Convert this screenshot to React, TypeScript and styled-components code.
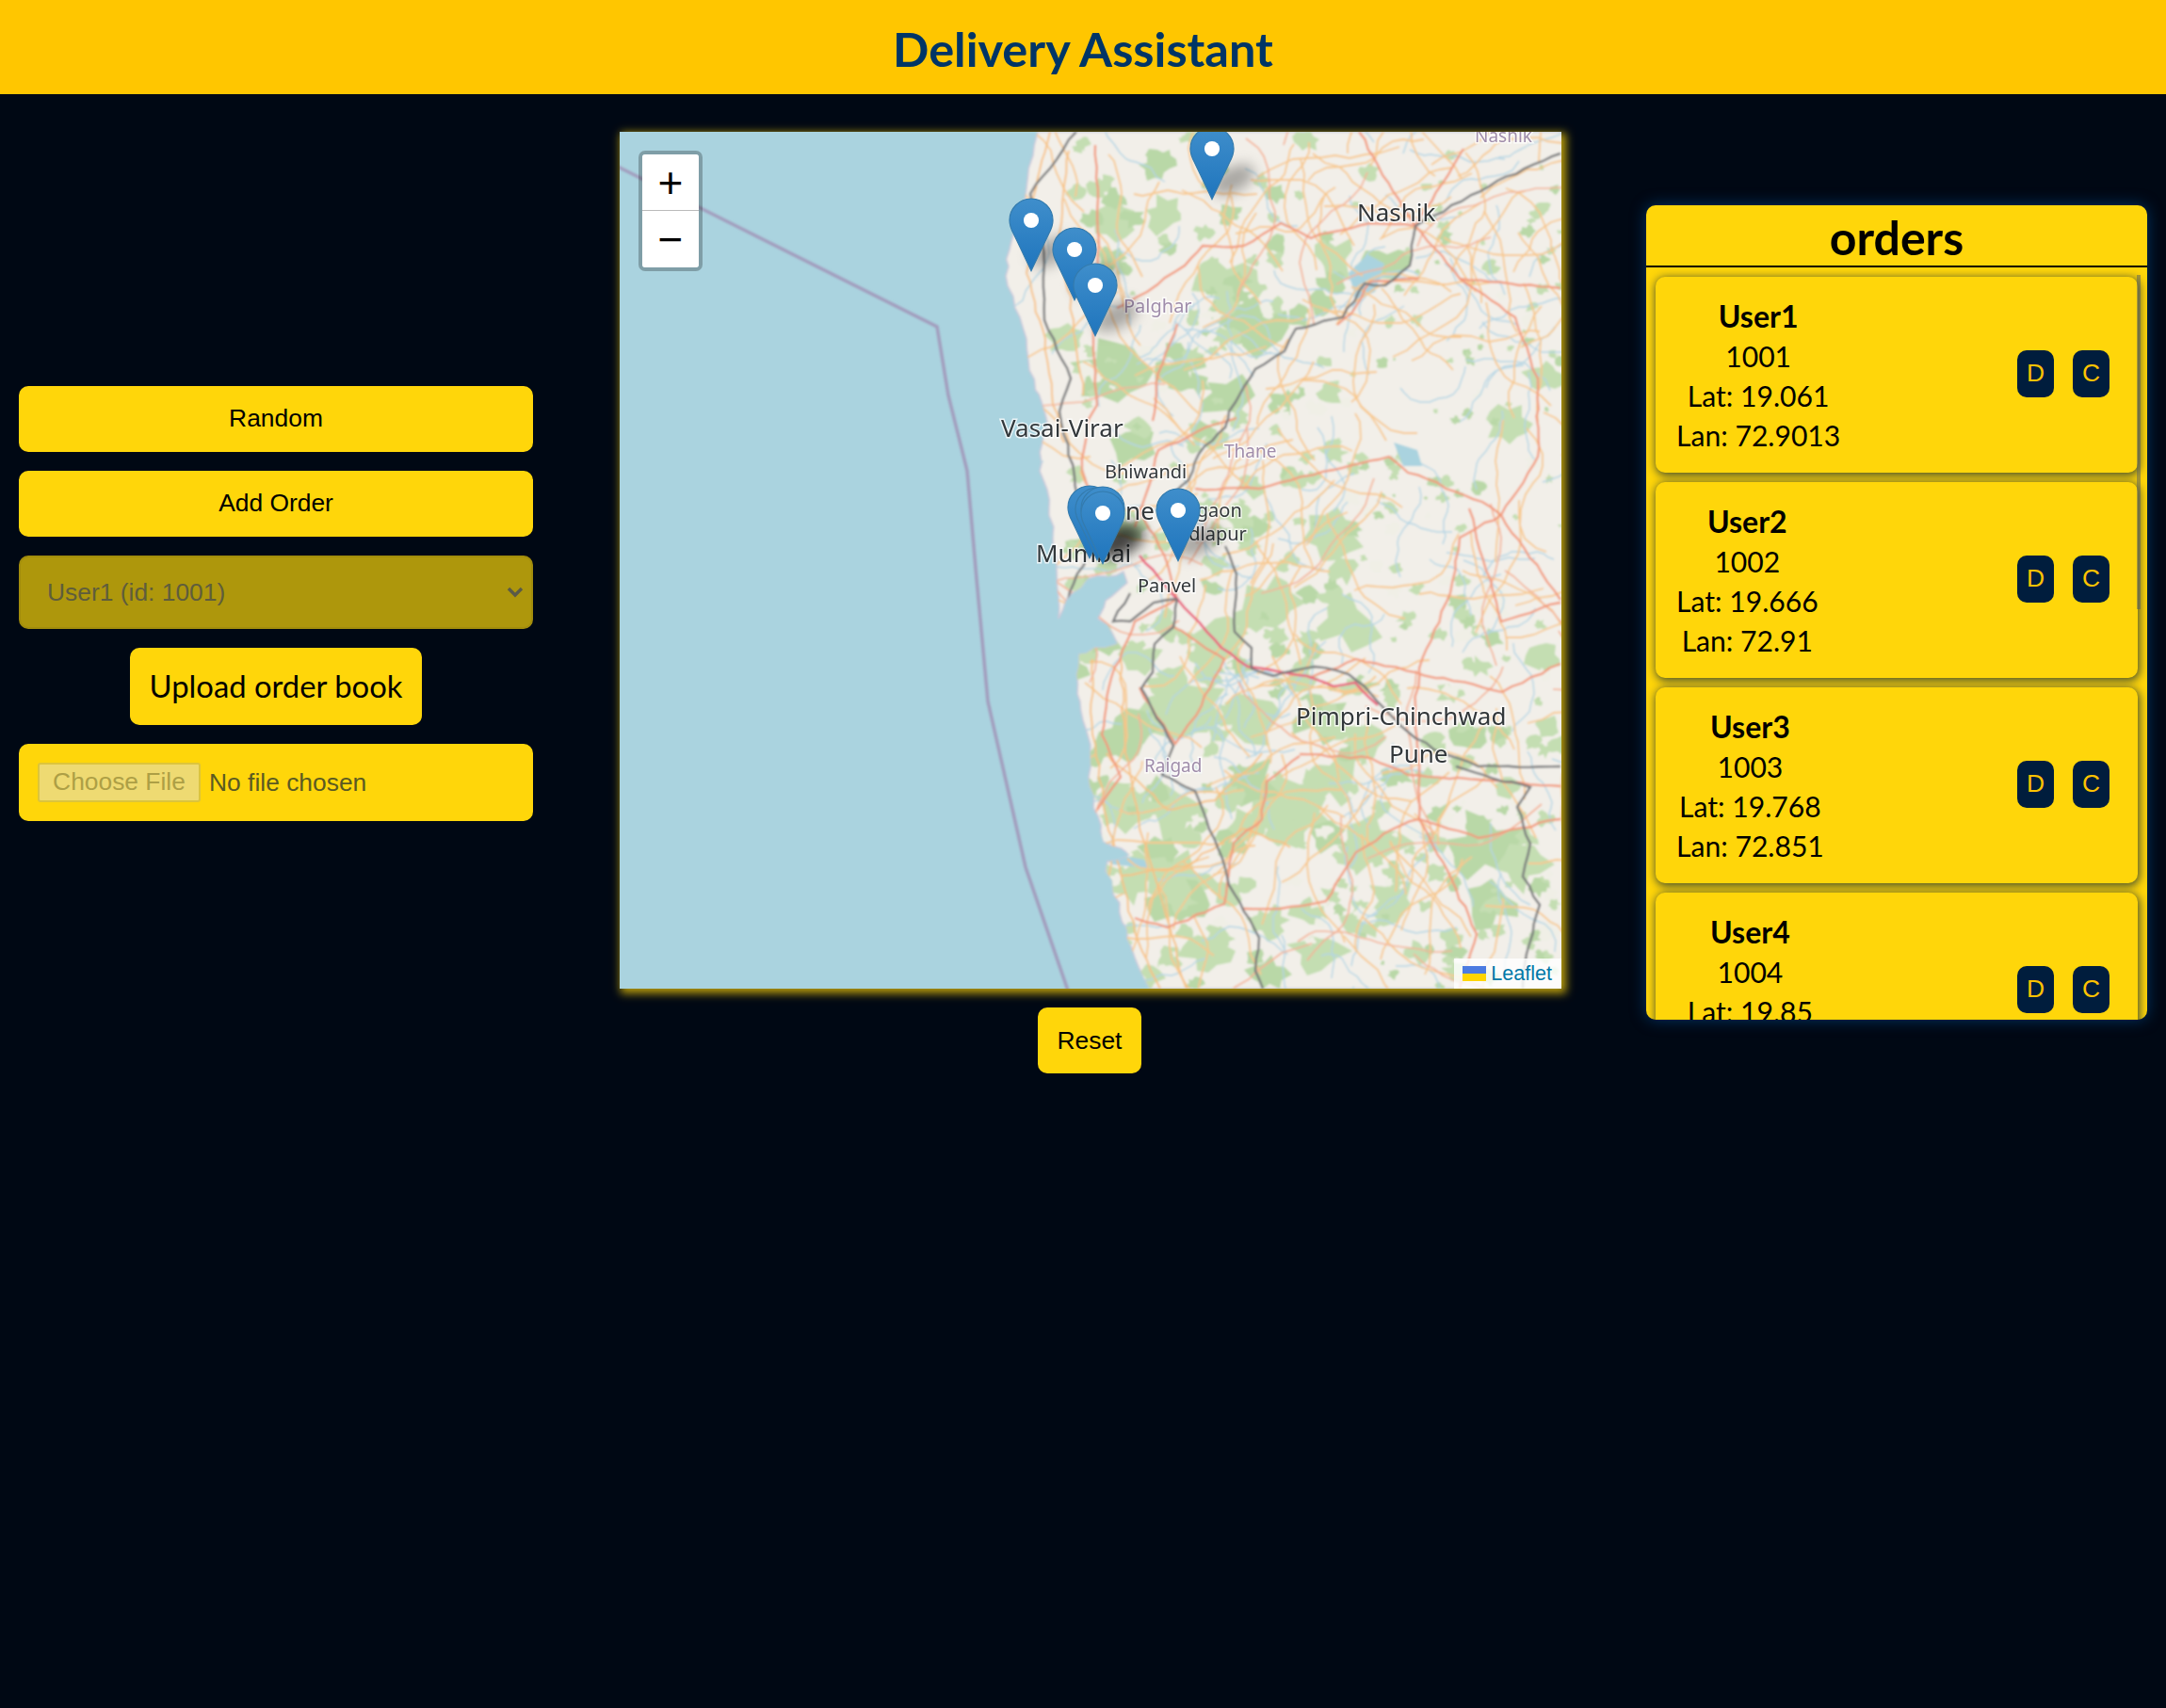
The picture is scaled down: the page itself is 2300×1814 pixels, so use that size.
import styled, { createGlobalStyle } from "styled-components";

const GlobalStyle = createGlobalStyle`
  body {
    margin: 0;
    background-color: #000814;
    font-family: "Lato", "Open Sans", sans-serif;
  }
`;

const Page = styled.div`
  min-height: 1814px;
  background-color: #000814;
`;

const Header = styled.header`
  height: 100px;
  display: flex;
  align-items: center;
  justify-content: center;
  background-color: #ffc600;
`;

const Title = styled.h1`
  margin: 3px 0 0;
  font-size: 50.5px;
  font-weight: 700;
  color: #003566;
`;

const Main = styled.main`
  display: flex;
  align-items: center;
  padding: 40px 0;
`;

const Controls = styled.section`
  width: 546px;
  margin: 1px 0 0 20px;
  display: flex;
  flex-direction: column;
  align-items: center;
  gap: 20px;
`;

const WideButton = styled.button`
  width: 100%;
  height: 70px;
  border: none;
  border-radius: 10px;
  background-color: #ffd60a;
  color: #000;
  font-family: "Liberation Sans", Arial, sans-serif;
  font-size: 26.4px;
`;

const SelectWrap = styled.div`
  position: relative;
  width: 100%;
`;

const OrderSelect = styled.select`
  display: block;
  width: 100%;
  height: 78px;
  padding: 0 0 0 28px;
  appearance: none;
  border: 2px solid #a28d0c;
  border-radius: 10px;
  background-color: #ae970c;
  color: #5f5d3c;
  opacity: 1;
  font-family: "Liberation Sans", Arial, sans-serif;
  font-size: 26.4px;
`;

const SelectArrow = styled.svg`
  position: absolute;
  top: 32px;
  right: 10px;
  width: 18px;
  height: 14px;
  pointer-events: none;
`;

const UploadLabel = styled.label`
  height: 82px;
  padding: 0 20.5px;
  display: flex;
  align-items: center;
  border-radius: 10px;
  background-color: #ffd60a;
  color: #000;
  font-size: 32.8px;
`;

const FileInput = styled.input`
  box-sizing: border-box;
  width: 100%;
  height: 82px;
  padding: 20px;
  border-radius: 10px;
  background-color: #ffd60a;
  color: #5b5a22;
  font-family: "Liberation Sans", Arial, sans-serif;
  font-size: 26.4px;

  &::file-selector-button {
    height: 42px;
    width: 173px;
    margin-right: 9px;
    border: 2px solid #dcc43c;
    border-radius: 3px;
    background-color: #eeda72;
    color: #ad9f45;
    font-family: "Liberation Sans", Arial, sans-serif;
    font-size: 26.4px;
  }
`;

const MapColumn = styled.section`
  width: 1000px;
  margin-left: 92px;
  display: flex;
  flex-direction: column;
  align-items: center;
  gap: 20px;
`;

const MapGlow = styled.div`
  width: 1000px;
  height: 910px;
  box-shadow: 3px 3px 9px 2px rgba(255, 214, 10, 0.72);
`;

const MapFrame = styled.div`
  position: relative;
  width: 1000px;
  height: 910px;
  overflow: hidden;
`;

const MapCanvas = styled.svg`
  display: block;
  width: 1000px;
  height: 910px;
`;

const ZoomBox = styled.div`
  position: absolute;
  top: 20px;
  left: 20px;
  width: 60px;
  display: flex;
  flex-direction: column;
  border: 4px solid rgba(0, 0, 0, 0.25);
  border-radius: 7px;
  background-clip: padding-box;
`;

const ZoomButton = styled.button<{ $first?: boolean }>`
  height: 60px;
  padding: 0;
  border: none;
  border-bottom: ${(p) => (p.$first ? "1px solid #bbb" : "none")};
  border-radius: ${(p) => (p.$first ? "3px 3px 0 0" : "0 0 3px 3px")};
  background-color: #fff;
  color: #000;
  font-family: "Liberation Sans", Arial, sans-serif;
  font-size: 46px;
  line-height: 1;
`;

const Attribution = styled.div`
  position: absolute;
  right: 0;
  bottom: 0;
  height: 32px;
  padding: 0 10px 0 9px;
  display: flex;
  align-items: center;
  gap: 5px;
  background-color: rgba(255, 255, 255, 0.8);
  color: #0078a8;
  font-family: "Liberation Sans", Arial, sans-serif;
  font-size: 21.6px;
`;

const FlagIcon = styled.svg`
  width: 25px;
  height: 16px;
`;

const ResetButton = styled.button`
  width: 110px;
  height: 70px;
  margin-right: 2px;
  border: none;
  border-radius: 10px;
  background-color: #ffd60a;
  color: #000;
  font-family: "Liberation Sans", Arial, sans-serif;
  font-size: 26.4px;
`;

const OrdersPanel = styled.aside`
  position: relative;
  width: 532px;
  height: 865px;
  margin: 20px 0 0 90px;
  overflow: hidden;
  border-radius: 10px;
  background-color: #ffd60a;
  box-shadow: 0 0 16px #003566;
`;

const PanelTitle = styled.h2`
  box-sizing: border-box;
  height: 66px;
  margin: 0;
  border-bottom: 2px solid #000;
  font-size: 50px;
  line-height: 68px;
  font-weight: 700;
  text-align: center;
  color: #000;
`;

const OrderList = styled.div`
  padding: 10px;
  display: flex;
  flex-direction: column;
  gap: 10px;
`;

const OrderCard = styled.div`
  flex: none;
  height: 208px;
  box-sizing: border-box;
  padding: 23px 30px 20px 22px;
  display: flex;
  align-items: center;
  justify-content: space-between;
  border-radius: 10px;
  background-color: #ffd60a;
  box-shadow: 1px 2px 10px 1px rgba(0, 29, 61, 0.72);
`;

const OrderInfo = styled.div`
  text-align: center;
  font-size: 30.1px;
  line-height: 42px;
  color: #000;
`;

const UserName = styled.div`
  font-size: 32px;
  font-weight: 700;
`;

const CardActions = styled.div`
  display: flex;
  gap: 20px;
  margin-top: -5px;
`;

const ActionButton = styled.button`
  height: 50px;
  padding: 0 10px;
  border: none;
  border-radius: 10px;
  background-color: #001d3d;
  color: #ffc300;
  font-family: "Liberation Sans", Arial, sans-serif;
  font-size: 26.4px;
`;

const ScrollThumb = styled.div`
  position: absolute;
  top: 74px;
  right: 7px;
  width: 4px;
  height: 355px;
  background-color: rgba(80, 90, 100, 0.5);
`;

const MapLabel = styled.text<{ $size: number; $district?: boolean }>`
  font-family: "Noto Sans", "Open Sans", sans-serif;
  font-size: ${(p) => p.$size}px;
  fill: ${(p) => (p.$district ? "#a08dab" : "#33373b")};
  stroke: rgba(255, 255, 255, 0.75);
  stroke-width: 3px;
  paint-order: stroke;
`;

const orders = [
  { name: "User1", id: 1001, lat: 19.061, lan: 72.9013 },
  { name: "User2", id: 1002, lat: 19.666, lan: 72.91 },
  { name: "User3", id: 1003, lat: 19.768, lan: 72.851 },
  { name: "User4", id: 1004, lat: 19.85, lan: 72.855 },
];

type Pt = [number, number];

const toPath = (pts: Pt[]) => "M" + pts.map((p) => p.join(" ")).join("L");

// fixed seed so every render draws the same map
const makeRandom = (seed: number) => () => {
  seed = (seed * 1664525 + 1013904223) >>> 0;
  return seed / 4294967296;
};

const rnd = makeRandom(7);

// break a traced line into short wiggly pieces so it looks like a road
const roughen = (pts: Pt[], amount: number, piece = 11): Pt[] => {
  const out: Pt[] = [pts[0]];
  for (let i = 1; i < pts.length; i++) {
    const [ax, ay] = pts[i - 1];
    const [bx, by] = pts[i];
    const n = Math.max(1, Math.round(Math.hypot(bx - ax, by - ay) / piece));
    for (let k = 1; k <= n; k++) {
      const t = k / n;
      const j = k === n ? 0 : amount;
      out.push([
        Math.round((ax + (bx - ax) * t + (rnd() - 0.5) * j) * 10) / 10,
        Math.round((ay + (by - ay) * t + (rnd() - 0.5) * j) * 10) / 10,
      ]);
    }
  }
  return out;
};

const coast: Pt[] = [
  ...roughen(
    [
      [1102, 140], [1097, 165], [1090, 200], [1078, 235], [1072, 265], [1068, 293], [1076, 315], [1083, 337],
      [1090, 360], [1093, 393], [1107, 430], [1113, 453], [1107, 470], [1104, 500], [1112, 520], [1114, 538],
      [1118, 569], [1122, 605], [1124, 634], [1124, 657], [1138, 630], [1154, 615], [1176, 612], [1193, 607],
      [1197, 619], [1174, 638], [1166, 657], [1181, 672], [1187, 684], [1174, 688], [1146, 695], [1144, 737],
      [1150, 765], [1158, 791], [1156, 825], [1166, 867], [1172, 894], [1200, 908], [1176, 915], [1174, 925],
      [1189, 959], [1197, 997], [1205, 1017], [1221, 1050],
    ],
    5
  ),
  [1660, 1050],
  [1660, 140],
];

const boundary: Pt[] = [
  [656, 177], [995, 347], [1007, 420], [1027, 500], [1037, 615], [1049, 745], [1089, 921], [1134, 1052],
];

const railways: Pt[][] = [
  [[1143, 140], [1094, 206], [1107, 258], [1109, 340], [1137, 402], [1125, 437], [1141, 506], [1146, 560]],
  [[1657, 163], [1590, 192], [1503, 240], [1497, 282], [1471, 303], [1449, 301], [1426, 337], [1376, 349], [1364, 373], [1333, 392], [1305, 437], [1301, 454], [1273, 482], [1262, 510], [1240, 530]],
  [[1250, 636], [1246, 666], [1226, 684], [1224, 714], [1212, 731], [1246, 792], [1234, 823], [1269, 840], [1301, 922], [1305, 940], [1337, 996], [1333, 1031], [1341, 1050]],
  [[1301, 580], [1313, 610], [1311, 671], [1329, 688], [1329, 710], [1352, 718], [1396, 708], [1432, 716], [1455, 736], [1479, 762], [1503, 784], [1534, 801], [1570, 814], [1657, 814]],
  [[1546, 814], [1586, 827], [1625, 836], [1611, 857], [1625, 896], [1617, 931], [1635, 961], [1621, 1013], [1617, 1050]],
  [[1130, 650], [1140, 620], [1165, 570]],
  [[1200, 630], [1182, 660], [1200, 660], [1225, 640], [1250, 636]],
].map((line) => roughen(line as Pt[], 2.5));

const motorway = roughen(
  [[1210, 590], [1250, 636], [1297, 688], [1325, 708], [1388, 718], [1416, 729], [1439, 725], [1463, 749]],
  1.5
);

const mainRoads: Pt[][] = [
  [[1503, 240], [1550, 296], [1609, 337], [1633, 402], [1633, 485], [1594, 547], [1550, 571], [1540, 630], [1507, 710], [1503, 749], [1507, 827], [1507, 870], [1542, 935], [1568, 992], [1550, 1050]],
  [[1503, 240], [1455, 237], [1392, 253], [1360, 237], [1321, 261], [1277, 261], [1258, 282], [1218, 310], [1186, 327]],
  [[1503, 240], [1479, 203], [1443, 140]],
  [[1163, 154], [1167, 258], [1161, 361], [1165, 430], [1155, 447], [1149, 499], [1170, 560]],
  [[1269, 519], [1337, 519], [1416, 499], [1475, 485], [1495, 502], [1574, 533], [1594, 547], [1657, 637]],
  [[1313, 444], [1289, 451], [1230, 478], [1220, 516], [1205, 560]],
  [[1250, 344], [1230, 396], [1224, 447]],
  [[1554, 158], [1503, 240]],
  [[1550, 296], [1657, 306]],
  [[1507, 296], [1455, 299], [1435, 333], [1420, 345]],
  [[1657, 705], [1595, 735], [1503, 714], [1440, 700], [1390, 720]],
  [[1380, 801], [1455, 805], [1495, 823], [1657, 835]],
  [[1380, 803], [1345, 830], [1340, 870], [1310, 895], [1300, 960], [1240, 985], [1205, 975]],
  [[1657, 870], [1570, 890], [1507, 870], [1480, 880], [1440, 905], [1408, 957], [1360, 965], [1320, 965]],
  [[1560, 540], [1594, 660], [1657, 640]],
  [[1250, 636], [1205, 660], [1180, 720], [1170, 780], [1190, 825], [1165, 860]],
  [[1246, 666], [1300, 700], [1270, 760], [1248, 790], [1210, 730]],
  [[1210, 540], [1240, 600], [1250, 636]],
].map((line) => roughen(line as Pt[], 3));

// orange roads that follow the coast and the first valleys inland
const coastRoads: Pt[][] = [
  [[1115, 140], [1100, 200], [1090, 290], [1110, 360], [1118, 430], [1130, 470]],
  [[1135, 160], [1125, 260], [1140, 340], [1150, 420]],
  [[1160, 700], [1160, 780], [1172, 850], [1185, 910], [1205, 990], [1232, 1050]],
  [[1190, 700], [1195, 800], [1210, 880], [1235, 960], [1260, 1050]],
  [[1175, 800], [1240, 860], [1290, 850], [1340, 800]],
  [[1190, 930], [1260, 920], [1320, 880], [1370, 900]],
].map((line) => roughen(line as Pt[], 4));

const lakes: Pt[][] = [
  [[1432, 290], [1452, 270], [1470, 280], [1460, 310], [1440, 318]],
  [[1170, 905], [1215, 913], [1220, 922], [1180, 918]],
  [[1480, 470], [1505, 478], [1510, 495], [1490, 495]],
];

const blob = (cx: number, cy: number, r: number): string => {
  const pts: Pt[] = [];
  const n = 13;
  for (let i = 0; i < n; i++) {
    const a = (i / n) * Math.PI * 2;
    const d = r * (0.5 + rnd() * 0.8);
    pts.push([Math.round(cx + Math.cos(a) * d), Math.round(cy + Math.sin(a) * d * 0.85)]);
  }
  return toPath(pts) + "Z";
};

const handForests: [number, number, number][] = [
  [1471, 282, 26], [1416, 275, 24], [1301, 302, 30], [1329, 347, 38], [1182, 234, 24], [1238, 227, 24],
  [1182, 395, 38], [1131, 361, 18], [1261, 749, 48], [1194, 783, 34], [1190, 853, 34], [1257, 940, 36],
  [1250, 961, 30], [1376, 862, 40], [1455, 896, 38], [1574, 900, 40], [1613, 918, 30], [1416, 567, 28],
  [1300, 420, 26], [1213, 700, 22], [1330, 770, 34], [1400, 760, 30], [1480, 960, 28], [1350, 640, 30],
  [1330, 560, 22], [1600, 450, 26], [1640, 400, 22], [1200, 470, 26], [1430, 660, 34], [1250, 860, 34],
  [1330, 830, 30], [1300, 680, 26], [1420, 830, 30], [1580, 960, 28], [1400, 1010, 28], [1280, 1010, 26],
  [1250, 390, 26], [1200, 560, 18], [1640, 700, 22], [1560, 780, 18],
];

const forests = [
  ...handForests.map(([x, y, r]) => blob(x, y, r)),
  ...Array.from({ length: 420 }, () => {
    const x = 1130 + rnd() * 530;
    const y = 145 + rnd() * 905;
    const weight = (y > 640 ? 1 : 0.65) * (x < 1460 ? 1.1 : 0.65);
    return blob(x, y, (4 + rnd() * 17) * weight);
  }),
];

const clearings = Array.from({ length: 90 }, () => blob(1150 + rnd() * 500, 300 + rnd() * 750, 3 + rnd() * 8));

const walk = (step: number, count: number, wobble: number): Pt[] => {
  let x = 1110 + rnd() * 550;
  let y = 140 + rnd() * 910;
  let a = rnd() * Math.PI * 2;
  const pts: Pt[] = [[Math.round(x), Math.round(y)]];
  for (let i = 0; i < count; i++) {
    a += (rnd() - 0.5) * wobble;
    const s = step * (0.6 + rnd() * 0.8);
    x += Math.cos(a) * s;
    y += Math.sin(a) * s;
    pts.push([Math.round(x), Math.round(y)]);
  }
  return pts;
};

const sideRoads = Array.from({ length: 170 }, () => toPath(walk(13, 11, 0.9)));
const pinkRoads = Array.from({ length: 26 }, () => toPath(walk(13, 14, 0.7)));
const rivers = Array.from({ length: 130 }, () => toPath(walk(9, 11, 1.2)));

const PIN = "M12.5 .5C5.9 .5 .5 5.9 .5 12.5C.5 15 1.4 17.5 2.8 20L12.5 40.5L22.2 20C23.6 17.5 24.5 15 24.5 12.5C24.5 5.9 19.1 .5 12.5 .5Z";

const pins: Pt[] = [
  [1287, 213], [1095, 289], [1141, 320], [1163, 358], [1157, 594], [1165, 596], [1171, 595], [1171, 600], [1251, 597],
];

const PinMark = ({ x, y }: { x: number; y: number }) => (
  <g transform={`translate(${x - 24} ${y - 79}) scale(1.92)`}>
    <path d={PIN} fill="url(#pinFill)" stroke="#347bad" strokeWidth=".6" />
    <circle cx="12.5" cy="12.5" r="4.2" fill="#fff" />
  </g>
);

const MapDrawing = () => (
  <MapCanvas viewBox="658 140 1000 910">
    <defs>
      <linearGradient id="pinFill" x1="0" y1="0" x2="0" y2="1">
        <stop offset="0" stopColor="#3f8ecb" />
        <stop offset="1" stopColor="#1f75bd" />
      </linearGradient>
      <clipPath id="landClip">
        <path d={toPath(coast) + "Z"} />
      </clipPath>
      <filter id="tileBlur" x="-2%" y="-2%" width="104%" height="104%">
        <feGaussianBlur stdDeviation="0.8" />
      </filter>
      <filter id="labelBlur" x="-2%" y="-2%" width="104%" height="104%">
        <feGaussianBlur stdDeviation="0.45" />
      </filter>
      <filter id="shadowBlur" x="-60%" y="-60%" width="220%" height="220%">
        <feGaussianBlur stdDeviation="7" />
      </filter>
    </defs>
    <rect x="658" y="140" width="1000" height="910" fill="#aad3df" />
    <g filter="url(#tileBlur)">
      <path d={toPath(boundary)} fill="none" stroke="#a29dbd" strokeWidth="3.5" />
      <path d={toPath(coast) + "Z"} fill="#f2efe9" stroke="#cfc9da" strokeWidth="1.5" />
      <g clipPath="url(#landClip)">
        {forests.map((d, i) => (
          <path key={i} d={d} fill={i % 3 === 0 ? "#b9d8a7" : "#c4deb2"} />
        ))}
        {clearings.map((d, i) => (
          <path key={i} d={d} fill="#f0efe6" />
        ))}
        {rivers.map((d, i) => (
          <path key={i} d={d} fill="none" stroke="#b4d5e4" strokeWidth="1.4" />
        ))}
        {lakes.map((pts, i) => (
          <path key={i} d={toPath(pts) + "Z"} fill="#aad3df" />
        ))}
        {sideRoads.map((d, i) => (
          <path key={i} d={d} fill="none" stroke="#f7c88e" strokeWidth="1.8" />
        ))}
        {coastRoads.map((pts, i) => (
          <path key={i} d={toPath(pts)} fill="none" stroke="#f7c183" strokeWidth="1.9" />
        ))}
        {pinkRoads.map((d, i) => (
          <path key={i} d={d} fill="none" stroke="#f4b397" strokeWidth="1.7" />
        ))}
        {mainRoads.map((pts, i) => (
          <path key={i} d={toPath(pts)} fill="none" stroke="#f2997c" strokeWidth="2.3" />
        ))}
        <path d={toPath(motorway)} fill="none" stroke="#e9627e" strokeWidth="2.6" />
        {railways.map((pts, i) => (
          <path key={i} d={toPath(pts)} fill="none" stroke="#77787a" strokeWidth="2.4" />
        ))}
      </g>
    </g>
    <g filter="url(#labelBlur)">
      <MapLabel x={1566} y={151} $size={19} $district>Nashik</MapLabel>
      <MapLabel x={1441} y={235} $size={26}>Nashik</MapLabel>
      <MapLabel x={1193} y={332} $size={20} $district>Palghar</MapLabel>
      <MapLabel x={1063} y={464} $size={26}>Vasai-Virar</MapLabel>
      <MapLabel x={1300} y={486} $size={19} $district>Thane</MapLabel>
      <MapLabel x={1173} y={508} $size={20}>Bhiwandi</MapLabel>
      <MapLabel x={1150} y={552} $size={26}>Thane</MapLabel>
      <MapLabel x={1100} y={597} $size={26}>Mumbai</MapLabel>
      <MapLabel x={1251} y={549} $size={20}>Ulgaon</MapLabel>
      <MapLabel x={1238} y={574} $size={20}>Badlapur</MapLabel>
      <MapLabel x={1208} y={629} $size={20}>Panvel</MapLabel>
      <MapLabel x={1376} y={770} $size={26}>Pimpri-Chinchwad</MapLabel>
      <MapLabel x={1475} y={810} $size={26}>Pune</MapLabel>
      <MapLabel x={1215} y={820} $size={19} $district>Raigad</MapLabel>
    </g>
    {pins.map(([x, y], i) => (
      <ellipse
        key={i}
        cx={x + 22}
        cy={y - 22}
        rx="25"
        ry="13"
        fill="rgba(0,0,0,.3)"
        filter="url(#shadowBlur)"
        transform={`rotate(-28 ${x + 22} ${y - 22})`}
      />
    ))}
    {pins.map(([x, y], i) => (
      <PinMark key={i} x={x} y={y} />
    ))}
  </MapCanvas>
);

export default function App() {
  return (
    <Page>
      <GlobalStyle />
      <Header>
        <Title>Delivery Assistant</Title>
      </Header>
      <Main>
        <Controls>
          <WideButton>Random</WideButton>
          <WideButton>Add Order</WideButton>
          <SelectWrap>
            <OrderSelect disabled defaultValue="1001">
              {orders.map((o) => (
                <option key={o.id} value={o.id}>
                  {o.name} (id: {o.id})
                </option>
              ))}
            </OrderSelect>
            <SelectArrow viewBox="0 0 18 14">
              <path d="M2 3l7 7 7-7" fill="none" stroke="#5a5a48" strokeWidth="3.4" />
            </SelectArrow>
          </SelectWrap>
          <UploadLabel>Upload order book</UploadLabel>
          <FileInput type="file" disabled />
        </Controls>
        <MapColumn>
          <MapGlow>
            <MapFrame>
              <MapDrawing />
              <ZoomBox>
                <ZoomButton $first>+</ZoomButton>
                <ZoomButton>−</ZoomButton>
              </ZoomBox>
              <Attribution>
                <FlagIcon viewBox="0 0 25 16">
                  <rect width="25" height="8" fill="#4c7be1" />
                  <rect y="8" width="25" height="8" fill="#ffd500" />
                </FlagIcon>
                Leaflet
              </Attribution>
            </MapFrame>
          </MapGlow>
          <ResetButton>Reset</ResetButton>
        </MapColumn>
        <OrdersPanel>
          <PanelTitle>orders</PanelTitle>
          <OrderList>
            {orders.map((o) => (
              <OrderCard key={o.id}>
                <OrderInfo>
                  <UserName>{o.name}</UserName>
                  <div>{o.id}</div>
                  <div>Lat: {o.lat}</div>
                  <div>Lan: {o.lan}</div>
                </OrderInfo>
                <CardActions>
                  <ActionButton>D</ActionButton>
                  <ActionButton>C</ActionButton>
                </CardActions>
              </OrderCard>
            ))}
          </OrderList>
          <ScrollThumb />
        </OrdersPanel>
      </Main>
    </Page>
  );
}
